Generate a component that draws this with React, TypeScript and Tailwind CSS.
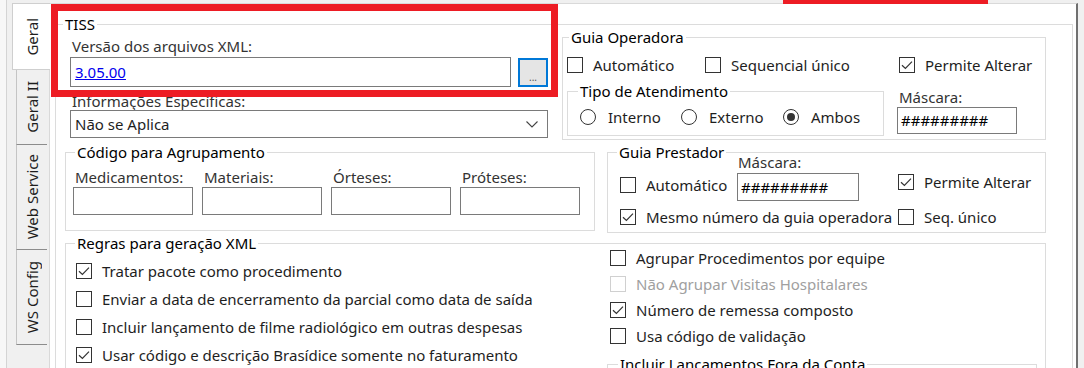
import React from "react";

type CheckProps = { label: string; checked?: boolean; disabled?: boolean; className?: string };

function Check({ checked, disabled }: { checked?: boolean; disabled?: boolean }) {
  return (
    <span
      className={`flex h-[16px] w-[16px] shrink-0 items-center justify-center border bg-white ${
        disabled ? "border-[#d0d0d0]" : "border-[#333333]"
      }`}
    >
      {checked && (
        <svg width="12" height="10" viewBox="0 0 12 10">
          <path d="M1 5.2l3.4 3.3L11 1.6" fill="none" stroke="#333333" strokeWidth="1.2" />
        </svg>
      )}
    </span>
  );
}

function CheckItem({ label, checked, disabled, className }: CheckProps) {
  return (
    <div className={`flex h-[18px] items-center ${className ?? ""}`}>
      <Check checked={checked} disabled={disabled} />
      <span className={`ml-[10px] whitespace-nowrap leading-[18px] ${disabled ? "text-[#a0a0a0]" : ""}`}>{label}</span>
    </div>
  );
}

function Radio({ label, checked, className }: { label: string; checked?: boolean; className?: string }) {
  return (
    <div className={`flex h-[18px] items-center ${className ?? ""}`}>
      <span className="flex h-[16px] w-[16px] shrink-0 items-center justify-center rounded-full border border-[#333333] bg-white">
        {checked && <span className="h-[8px] w-[8px] rounded-full bg-[#333333]" />}
      </span>
      <span className="ml-[12px] whitespace-nowrap leading-[18px]">{label}</span>
    </div>
  );
}

function Group({
  title,
  className,
  legendClass,
  children,
}: {
  title: string;
  className?: string;
  legendClass?: string;
  children?: React.ReactNode;
}) {
  return (
    <div className={`shrink-0 border border-[#dcdcdc] ${className ?? ""}`}>
      <div className={`-mt-[9px] w-fit whitespace-nowrap bg-white px-[2px] leading-[17px] text-black ${legendClass ?? ""}`}>
        {title}
      </div>
      {children}
    </div>
  );
}

function Field({ className, children }: { className?: string; children?: React.ReactNode }) {
  return <div className={`flex shrink-0 items-center border border-[#7a7a7a] bg-white ${className ?? ""}`}>{children}</div>;
}

export default function App() {
  const tabs = [
    { name: "Geral II", h: "h-[75px]" },
    { name: "Web Service", h: "h-[105px]" },
    { name: "WS Config", h: "h-[95px]" },
  ];

  return (
    <div className="relative flex h-[368px] w-[1084px] overflow-hidden bg-[#f0f0f0] font-['Noto_Sans',sans-serif] text-[15px] text-[#1e1e1e]">
      {/* vertical tabs */}
      <div className="flex w-[49px] shrink-0">
        <div className="w-[7px] shrink-0 border-r border-[#d4d4d4] bg-[#f7f7f7]" />
        <div className="flex flex-col pt-[3px]">
          <div className="relative z-10 ml-[5px] flex h-[67px] w-[38px] items-center justify-center border-y border-l border-[#cfcfcf] bg-white">
            <span className="rotate-180 leading-[18px] [writing-mode:vertical-rl]">Geral</span>
          </div>
          {tabs.map((t) => (
            <div
              key={t.name}
              className={`ml-[9px] flex w-[31px] items-center justify-center border-b border-l border-[#c4c4c4] border-b-[#8c8c8c] bg-[#f0f0f0] ${t.h}`}
            >
              <span className="rotate-180 whitespace-nowrap leading-[18px] [writing-mode:vertical-rl]">{t.name}</span>
            </div>
          ))}
        </div>
      </div>

      {/* tab page */}
      <div className="mt-[3px] flex h-[400px] w-[1029px] shrink-0 flex-col border-l border-t border-r-2 border-[#d9d9d9] border-r-[#707070] bg-white">
        <Group title="TISS" className="ml-[5px] mr-[3px] mt-[20px] h-[380px]" legendClass="ml-[7px]">
          {/* row 1 */}
          <div className="flex items-start">
            <div className="ml-[14px] mt-[4px] flex w-[478px] shrink-0 flex-col">
              <div className="pl-[2px] leading-[18px] text-[#333333]">Versão dos arquivos XML:</div>
              <div className="mt-[2px] flex items-start">
                <Field className="h-[30px] w-[441px] pl-[4px]">
                  <span className="text-[#0000ee] underline">3.05.00</span>
                </Field>
                <div className="ml-[7px] mt-[1px] flex h-[29px] w-[30px] items-end justify-center border-2 border-[#0078d7] bg-[#e5e5e5] pb-[3px] text-[10px] leading-[10px] text-[#555555]">
                  ...
                </div>
              </div>
              <div className="mt-[5px] pl-[2px] leading-[18px] text-[#333333]">Informações Específicas:</div>
              <Field className="h-[28px] w-[478px] justify-between pl-[4px] pr-[9px]">
                <span>Não se Aplica</span>
                <svg width="12" height="7" viewBox="0 0 12 7">
                  <path d="M0.5 0.5l5.5 5.5 5.5-5.5" fill="none" stroke="#444444" strokeWidth="1.1" />
                </svg>
              </Field>
            </div>

            <Group title="Guia Operadora" className="ml-[14px] mt-[4px] h-[103px] w-[484px]" legendClass="ml-[6px]">
              <div className="mt-[10px] flex pl-[4px]">
                <CheckItem label="Automático" className="w-[138px]" />
                <CheckItem label="Sequencial único" className="w-[194px]" />
                <CheckItem label="Permite Alterar" checked />
              </div>
              <div className="mt-[17px] flex items-start pl-[4px]">
                <Group title="Tipo de Atendimento" className="h-[45px] w-[317px]" legendClass="ml-[10px]">
                  <div className="mt-[8px] flex pl-[12px]">
                    <Radio label="Interno" className="w-[101px]" />
                    <Radio label="Externo" className="w-[102px]" />
                    <Radio label="Ambos" checked />
                  </div>
                </Group>
                <div className="-mt-[3px] ml-[13px] flex flex-col">
                  <div className="pl-[2px] leading-[18px] text-[#333333]">Máscara:</div>
                  <Field className="mt-[1px] h-[27px] w-[120px] pl-[3px]">
                    <span className="text-black">#########</span>
                  </Field>
                </div>
              </div>
            </Group>
          </div>

          {/* row 2 */}
          <div className="mt-[12px] flex items-start">
            <Group title="Código para Agrupamento" className="ml-[9px] h-[79px] w-[530px]" legendClass="ml-[9px]">
              <div className="mt-[7px] flex gap-[9px] pl-[7px]">
                {["Medicamentos:", "Materiais:", "Órteses:", "Próteses:"].map((l) => (
                  <div key={l} className="flex w-[120px] flex-col">
                    <div className="pl-[2px] leading-[18px] text-[#333333]">{l}</div>
                    <Field className="mt-[1px] h-[28px] w-[120px]" />
                  </div>
                ))}
              </div>
            </Group>

            <Group title="Guia Prestador" className="ml-[12px] h-[81px] w-[439px]" legendClass="ml-[9px]">
              <div className="-mt-[8px]">
                <div className="flex items-start pl-[12px]">
                  <CheckItem label="Automático" className="mt-[23px] w-[117px]" />
                  <div className="flex flex-col">
                    <div className="pl-[1px] leading-[18px] text-[#333333]">Máscara:</div>
                    <Field className="mt-[2px] h-[28px] w-[122px] pl-[3px]">
                      <span className="text-black">#########</span>
                    </Field>
                  </div>
                  <CheckItem label="Permite Alterar" checked className="ml-[39px] mt-[20px]" />
                </div>
                <div className="mt-[7px] flex pl-[12px]">
                  <CheckItem label="Mesmo número da guia operadora" checked className="w-[278px]" />
                  <CheckItem label="Seq. único" />
                </div>
              </div>
            </Group>
          </div>

          {/* row 3 */}
          <Group title="Regras para geração XML" className="ml-[9px] mt-[10px] h-[200px] w-[981px]" legendClass="ml-[9px]">
            <div className="flex items-start">
              <div className="mt-[10px] flex w-[544px] shrink-0 flex-col gap-[10px] pl-[10px]">
                <CheckItem label="Tratar pacote como procedimento" checked />
                <CheckItem label="Enviar a data de encerramento da parcial como data de saída" />
                <CheckItem label="Incluir lançamento de filme radiológico em outras despesas" />
                <CheckItem label="Usar código e descrição Brasídice somente no faturamento" checked />
              </div>
              <div className="-mt-[3px] flex flex-col">
                <div className="flex flex-col gap-[8px]">
                  <CheckItem label="Agrupar Procedimentos por equipe" />
                  <CheckItem label="Não Agrupar Visitas Hospitalares" disabled />
                  <CheckItem label="Número de remessa composto" checked />
                  <CheckItem label="Usa código de validação" />
                </div>
                <Group title="Incluir Lançamentos Fora da Conta" className="-ml-[3px] mt-[19px] h-[40px] w-[430px]" legendClass="ml-[10px]" />
              </div>
            </div>
          </Group>
        </Group>
      </div>

      {/* red annotation marks over the screenshot */}
      <div className="pointer-events-none absolute left-[51px] top-[4px] h-[93px] w-[507px] border-[7px] border-[#ed1c24]" />
      <div className="pointer-events-none absolute left-[783px] top-0 h-[4px] w-[205px] bg-[#ed1c24]" />
    </div>
  );
}
